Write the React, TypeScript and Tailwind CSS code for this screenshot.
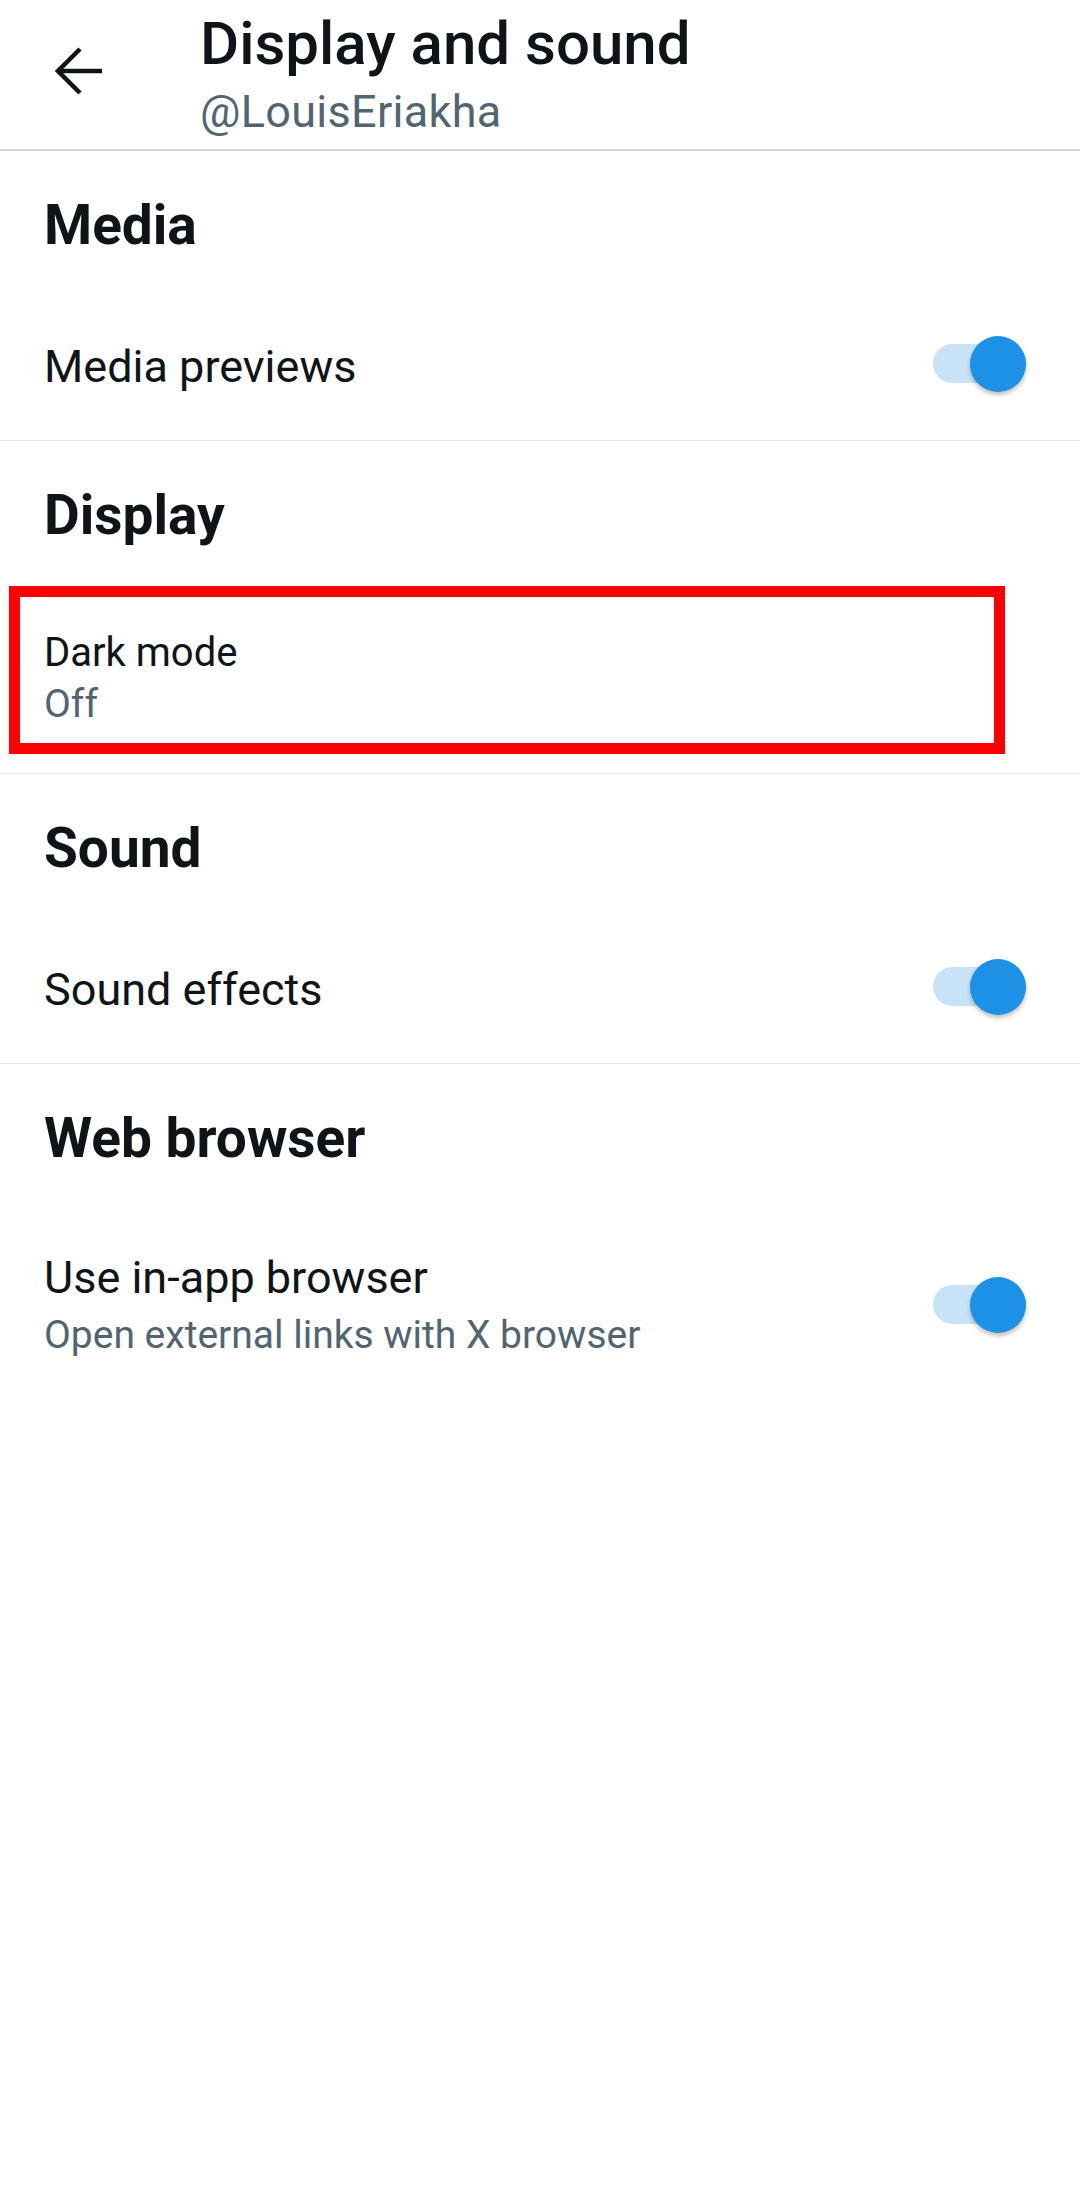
import React from "react";

// Twitter/X "Display and sound" settings screen

function Toggle({ single }: { single?: boolean }) {
  return (
    <div className={single ? "relative h-[56px] w-[93px] shrink-0 -translate-y-[3px]" : "relative h-[56px] w-[93px] shrink-0"}>
      <div className="absolute left-0 right-0 top-[8px] h-[39px] rounded-full bg-[#c8e3f8]" />
      <div className="absolute right-0 top-0 h-[56px] w-[56px] rounded-full bg-[#1d91e5] shadow-[0_3px_4px_rgba(0,0,0,0.25)]" />
    </div>
  );
}

function Heading({ children }: { children: React.ReactNode }) {
  return <h2 className="text-[55px] font-bold leading-[62px] text-[#0f1419]">{children}</h2>;
}

export default function App() {
  return (
    <div className="min-h-[2200px] w-full bg-white font-['Roboto',sans-serif] text-[#0f1419]">
      {/* header */}
      <header className="flex h-[151px] border-b-2 border-[#d5d9db]">
        <div className="w-[200px] shrink-0 pl-[55px] pt-[46px]">
          <svg width="50" height="50" viewBox="0 0 50 50" fill="none" stroke="#0f1419" strokeWidth="4.5">
            <path d="M25 3 L3 25 L25 47" strokeLinejoin="miter" />
            <path d="M3 25 H47" />
          </svg>
        </div>
        <div className="pt-[10px]">
          <div className="text-[60px] font-medium leading-[68px]">Display and sound</div>
          <div className="mt-[9px] text-[45px] leading-[50px] tracking-[0.3px] text-[#536471]">@LouisEriakha</div>
        </div>
      </header>

      {/* Media */}
      <section className="border-b border-[#e3e7e9] pb-[47px] pl-[44px] pr-[54px] pt-[43px]">
        <Heading>Media</Heading>
        <div className="mt-[85px] flex h-[52px] items-center justify-between">
          <div className="text-[45px] leading-[52px]">Media previews</div>
          <Toggle single />
        </div>
      </section>

      {/* Display */}
      <section className="border-b border-[#e3e7e9] pb-[19px] pt-[43px]">
        <div className="pl-[44px]">
          <Heading>Display</Heading>
        </div>
        <div className="ml-[9px] mt-[40px] w-[996px] border-[11px] border-[#ff0000] pb-[16px] pl-[24px] pt-[32px]">
          <div className="text-[40px] leading-[47px]">Dark mode</div>
          <div className="mt-[5px] text-[39px] leading-[46px] text-[#536471]">Off</div>
        </div>
      </section>

      {/* Sound */}
      <section className="border-b border-[#e3e7e9] pb-[47px] pl-[44px] pr-[54px] pt-[43px]">
        <Heading>Sound</Heading>
        <div className="mt-[85px] flex h-[52px] items-center justify-between">
          <div className="text-[45px] leading-[52px]">Sound effects</div>
          <Toggle single />
        </div>
      </section>

      {/* Web browser */}
      <section className="pl-[44px] pr-[54px] pt-[43px]">
        <Heading>Web browser</Heading>
        <div className="mt-[83px] flex items-center justify-between">
          <div>
            <div className="text-[45px] leading-[52px]">Use in-app browser</div>
            <div className="mt-[8px] text-[39px] leading-[46px] text-[#536471]">Open external links with X browser</div>
          </div>
          <Toggle />
        </div>
      </section>
    </div>
  );
}
